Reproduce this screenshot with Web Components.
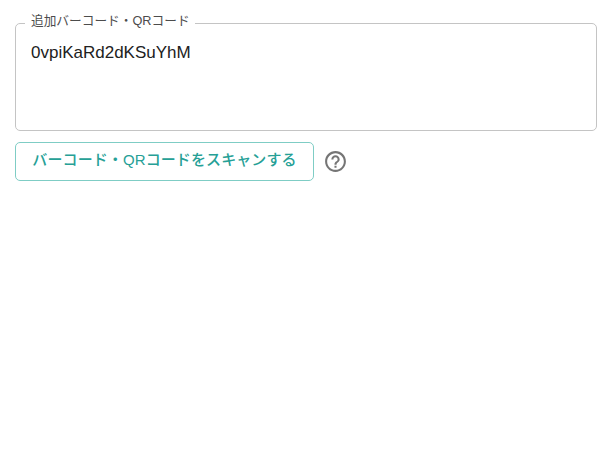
<!DOCTYPE html>
<html lang="ja">
<head>
<meta charset="utf-8">
<title>Scan</title>
<style>
  html, body { margin: 0; background: #fff; }
  body { font-family: "Liberation Sans", "Noto Sans CJK JP", sans-serif; }
</style>
</head>
<body>
<scan-form></scan-form>
<script>
class OutlinedField extends HTMLElement {
  connectedCallback() {
    this.attachShadow({ mode: 'open' });
    this.shadowRoot.innerHTML = `
      <style>
        :host { display: block; }
        fieldset {
          margin: 0;
          height: 116px;
          box-sizing: border-box;
          padding: 0 15px;
          border: 1px solid #c4c4c4;
          border-radius: 5px;
        }
        legend {
          margin-left: -6px;
          padding: 0 5px 3px 6px;
          font: 400 12.7px/13px "Liberation Sans", "Noto Sans CJK JP", sans-serif;
          color: #4c4c4c;
        }
        .value {
          margin-top: 12px;
          font: 17px/20px "Liberation Sans", Arial, sans-serif;
          color: #212121;
        }
      </style>
      <fieldset>
        <legend>${this.getAttribute('label')}</legend>
        <div class="value"><slot></slot></div>
      </fieldset>
    `;
  }
}
customElements.define('outlined-field', OutlinedField);

class ScanButton extends HTMLElement {
  connectedCallback() {
    this.attachShadow({ mode: 'open' });
    this.shadowRoot.innerHTML = `
      <style>
        :host { display: block; }
        button {
          display: block;
          width: 299px;
          height: 39px;
          padding: 0 0 3px;
          background: #fff;
          border: 1px solid #7fcdc5;
          border-radius: 5px;
          font: 500 15px/20px "Liberation Sans", "Noto Sans CJK JP", sans-serif;
          letter-spacing: 0.1px;
          color: #26a096;
        }
      </style>
      <button><slot></slot></button>
    `;
  }
}
customElements.define('scan-button', ScanButton);

class HelpIcon extends HTMLElement {
  connectedCallback() {
    this.attachShadow({ mode: 'open' });
    this.shadowRoot.innerHTML = `
      <style>
        :host { display: block; width: 25px; height: 25px; color: #757575; }
        svg { display: block; fill: currentColor; }
      </style>
      <svg width="25" height="25" viewBox="0 0 24 24">
        <path d="M11 18h2v-2h-2v2zm1-16C6.48 2 2 6.48 2 12s4.48 10 10 10 10-4.48 10-10S17.52 2 12 2zm0 18c-4.41 0-8-3.59-8-8s3.59-8 8-8 8 3.59 8 8-3.59 8-8 8zm0-14c-2.21 0-4 1.79-4 4h2c0-1.1.9-2 2-2s2 .9 2 2c0 2-3 1.75-3 5h2c0-2.25 3-2.5 3-5 0-2.21-1.79-4-4-4z"/>
      </svg>
    `;
  }
}
customElements.define('help-icon', HelpIcon);

class ScanForm extends HTMLElement {
  connectedCallback() {
    this.attachShadow({ mode: 'open' });
    this.shadowRoot.innerHTML = `
      <style>
        :host { display: block; padding: 15px 13px 0 15px; }
        .actions { display: flex; align-items: center; gap: 9px; margin-top: 11px; }
      </style>
      <outlined-field label="追加バーコード・QRコード">0vpiKaRd2dKSuYhM</outlined-field>
      <div class="actions">
        <scan-button>バーコード・QRコードをスキャンする</scan-button>
        <help-icon></help-icon>
      </div>
    `;
  }
}
customElements.define('scan-form', ScanForm);
</script>
</body>
</html>
